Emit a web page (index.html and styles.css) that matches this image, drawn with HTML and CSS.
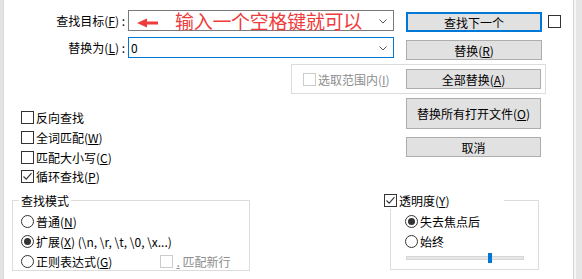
FILE: index.html
```html
<!DOCTYPE html>
<html lang="zh-CN">
<head>
<meta charset="utf-8">
<title>替换</title>
<link rel="stylesheet" href="styles.css">
</head>
<body>
<div class="frame">
  <div class="edge-l"></div>
  <div class="dialog">
    <div class="row row1">
      <div class="lbl">查找目标(<u>F</u>) :</div>
      <div class="combo">
        <svg class="arrow" width="22" height="10" viewBox="0 0 22 10"><polygon points="0,5 10,0.5 10,3.6 21,3.6 21,6.4 10,6.4 10,9.5" fill="#ee3b3b"/></svg>
        <span class="hint">输入一个空格键就可以</span>
        <svg class="chev" width="8" height="5" viewBox="0 0 8 5"><polyline points="0.5,0.5 4,4 7.5,0.5" fill="none" stroke="#555" stroke-width="1"/></svg>
      </div>
      <div class="btn btn-default">查找下一个</div>
      <div class="cb top-cb"></div>
    </div>
    <div class="row row2">
      <div class="lbl">替换为(<u>L</u>) :</div>
      <div class="combo focus">
        <span class="val">0</span>
        <svg class="chev" width="8" height="5" viewBox="0 0 8 5"><polyline points="0.5,0.5 4,4 7.5,0.5" fill="none" stroke="#555" stroke-width="1"/></svg>
      </div>
      <div class="btn btn-r">替换(<u>R</u>)</div>
    </div>
    <div class="selgroup">
      <div class="opt disabled"><span class="cb dis"></span><span>选取范围内(<u>I</u>)</span></div>
      <div class="btn btn-all">全部替换(<u>A</u>)</div>
    </div>
    <div class="lower">
      <div class="checks">
        <div class="opt"><span class="cb"></span><span>反向查找</span></div>
        <div class="opt"><span class="cb"></span><span>全词匹配(<u>W</u>)</span></div>
        <div class="opt"><span class="cb"></span><span>匹配大小写(<u>C</u>)</span></div>
        <div class="opt"><span class="cb checked"><svg width="11" height="11" viewBox="0 0 11 11"><polyline points="1.5,5.5 4.2,8.2 9.5,2.2" fill="none" stroke="#333" stroke-width="1.1"/></svg></span><span>循环查找(<u>P</u>)</span></div>
      </div>
      <div class="btncol">
        <div class="btn btn-tall">替换所有打开文件(<u>O</u>)</div>
        <div class="btn btn-cancel">取消</div>
      </div>
    </div>
    <div class="bottom">
      <div class="group mode">
        <div class="legend">查找模式</div>
        <div class="opt"><span class="rb"></span><span>普通(<u>N</u>)</span></div>
        <div class="opt"><span class="rb on"></span><span>扩展(<u>X</u>) (\n, \r, \t, \0, \x...)</span></div>
        <div class="opt"><span class="rb"></span><span>正则表达式(<u>G</u>)</span>
          <span class="newline disabled"><span class="cb dis"></span><span><u>.</u> 匹配新行</span></span>
        </div>
      </div>
      <div class="group trans">
        <div class="legend legend-cb"><span class="cb checked"><svg width="11" height="11" viewBox="0 0 11 11"><polyline points="1.5,5.5 4.2,8.2 9.5,2.2" fill="none" stroke="#333" stroke-width="1.1"/></svg></span><span>透明度(<u>Y</u>)</span></div>
        <div class="opt"><span class="rb on"></span><span>失去焦点后</span></div>
        <div class="opt"><span class="rb"></span><span>始终</span></div>
        <div class="track"><div class="thumb"></div></div>
      </div>
    </div>
  </div>
  <div class="edge-r"></div>
</div>
</body>
</html>
```
FILE: styles.css
```css
* { box-sizing: border-box; }
html, body { margin: 0; padding: 0; background: #fff; }
body {
  width: 582px; height: 279px; overflow: hidden;
  font-family: "Noto Sans CJK SC", "Noto Sans", sans-serif;
  font-size: 12px; color: #000;
}
u { text-decoration: underline; text-underline-offset: 1px; }
.frame { display: flex; height: 279px; }
.edge-l { width: 4px; background: #e3e3e3; border-right: 1px solid #dadada; }
.dialog { width: 569px; height: 279px; }
.edge-r {
  width: 9px; border-left: 1px solid #d4d4d4;
  background: linear-gradient(to right, #f6f6f6 0 2px, #e6e6e6 2px);
}

.row { display: flex; align-items: flex-start; height: 21px; }
.row1 { margin-top: 10px; }
.row2 { margin-top: 6px; }
.lbl { width: 124px; height: 21px; line-height: 21px; text-align: right; padding-right: 3px; white-space: nowrap; }
.combo {
  position: relative; width: 266px; height: 21px; border: 1px solid #7a7a7a;
  display: flex; align-items: center; background: #fff;
}
.combo.focus { border-color: #0078d7; }
.arrow { margin-left: 8px; margin-top: 4px; }
.hint { margin-left: 16px; color: #ee3b3b; font-size: 19px; line-height: 19px; letter-spacing: -0.3px; }
.val { margin-left: 2px; }
.chev { position: absolute; right: 6px; top: 8px; }

.btn {
  background: #e1e1e1; border: 1px solid #adadad;
  display: flex; align-items: center; justify-content: center;
  white-space: nowrap;
}
.btn-default { margin-left: 12px; margin-top: 2px; width: 136px; height: 20px; border: 2px solid #0078d7; }
.btn-r { margin-left: 12px; margin-top: 3px; width: 136px; height: 20px; }
.top-cb { margin-left: 6px; margin-top: 5px; }

.cb {
  display: inline-flex; align-items: center; justify-content: center;
  width: 13px; height: 13px; border: 1px solid #333; background: #fff; flex: none;
}
.cb.dis { border-color: #cccccc; }
.rb {
  display: inline-block; width: 13px; height: 13px; border: 1px solid #333;
  border-radius: 50%; background: #fff; flex: none; position: relative;
}
.rb.on::after {
  content: ""; position: absolute; left: 2px; top: 2px; width: 7px; height: 7px;
  border-radius: 50%; background: #333;
}
.opt { display: flex; align-items: center; height: 20px; gap: 2px; white-space: nowrap; }
.disabled { color: #8d8d8d; }

.selgroup {
  margin: 6px 0 0 287px; width: 255px; height: 30px;
  border: 1px solid #dcdcdc; display: flex; align-items: center; padding-right: 4px;
}
.selgroup .opt { margin-left: 11px; }
.btn-all { margin-left: auto; width: 135px; height: 20px; }

.lower { display: flex; height: 102px; margin-top: 4px; }
.checks { width: 402px; padding-left: 17px; padding-top: 9px; }
.checks .opt:last-child { margin-top: -1px; }
.btncol { display: flex; flex-direction: column; }
.btn-tall { width: 135px; height: 31px; }
.btn-cancel { width: 135px; height: 20px; margin-top: 8px; }

.bottom { display: flex; align-items: flex-start; }
.group { position: relative; border: 1px solid #dcdcdc; }
.legend {
  position: absolute; top: -9px; background: #fff; height: 17px; line-height: 17px;
  white-space: nowrap;
}
.mode { margin-left: 8px; width: 238px; height: 71px; padding: 10px 0 0 8px; }
.mode .legend { left: 6px; padding: 0 2px; }
.newline { display: inline-flex; align-items: center; gap: 3px; margin-left: 46px; }
.trans { margin-left: 140px; width: 149px; height: 70px; padding: 10px 0 0 14px; }
.legend-cb { left: -7px; width: 120px; display: flex; align-items: center; gap: 2px; }
.track {
  position: relative; margin-top: 5px; margin-left: 1px; width: 118px; height: 4px;
  background: #e7e7e7; border: 1px solid #d6d6d6;
}
.thumb { position: absolute; left: 81px; top: -4px; width: 4px; height: 10px; background: #0078d7; }
```
